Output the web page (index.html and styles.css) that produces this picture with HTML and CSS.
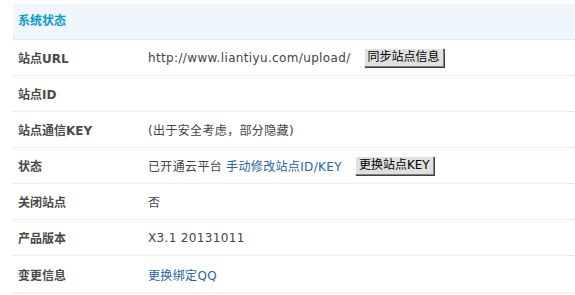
FILE: index.html
```html
<!DOCTYPE html>
<html>
<head>
<meta charset="utf-8">
<link rel="stylesheet" href="styles.css">
</head>
<body>
<div class="panel">
  <div class="head">系统状态</div>
  <div class="row"><div class="label">站点URL</div><div class="value">http://www.liantiyu.com/upload/<button class="btn">同步站点信息</button></div></div>
  <div class="row"><div class="label">站点ID</div><div class="value"></div></div>
  <div class="row"><div class="label">站点通信KEY</div><div class="value">(出于安全考虑，部分隐藏)</div></div>
  <div class="row"><div class="label">状态</div><div class="value">已开通云平台<a class="link gap" href="#">手动修改站点ID/KEY</a><button class="btn">更换站点KEY</button></div></div>
  <div class="row"><div class="label">关闭站点</div><div class="value">否</div></div>
  <div class="row"><div class="label">产品版本</div><div class="value">X3.1 20131011</div></div>
  <div class="row last"><div class="label">变更信息</div><div class="value"><a class="link" href="#">更换绑定QQ</a></div></div>
  <div class="foot"></div>
</div>
</body>
</html>
```

FILE: styles.css
```css
html, body {
  margin: 0;
  padding: 0;
  background: #fff;
}
body {
  font-family: "DejaVu Sans", "Noto Sans CJK SC", sans-serif;
  font-size: 12px;
  color: #333;
}
.panel {
  padding: 4px 0 0 13px;
}
.head {
  height: 35px;
  line-height: 35px;
  padding-left: 5px;
  background: #eff6fc;
  color: #0a9bcc;
  font-weight: bold;
  border-bottom: 1px dotted #cfe2f0;
}
.row {
  display: grid;
  grid-template-columns: 135px 1fr;
  align-items: center;
  height: 35px;
  border-bottom: 1px dotted #cfe2f0;
}
.row.last {
  height: 36px;
  border-bottom: none;
}
.label {
  padding-left: 5px;
  font-weight: bold;
  color: #4a4a4a;
}
.value {
  display: flex;
  align-items: center;
  color: #444;
  white-space: nowrap;
  letter-spacing: 0.35px;
}
.link {
  color: #2366a8;
  text-decoration: none;
}
.link.gap {
  margin-left: 4px;
}
.btn {
  margin-left: 13px;
  height: 19px;
  padding: 0 3px;
  font-family: "DejaVu Sans", "Noto Sans CJK SC", sans-serif;
  font-size: 12px;
  line-height: 15px;
  letter-spacing: 0;
  color: #000;
  background: #e0e0e0;
  border: 1px solid;
  border-color: #fff #808080 #808080 #fff;
  box-shadow: 1px 1px 0 #404040;
  border-radius: 0;
}
.foot {
  height: 2px;
  background: #eef4fa;
}
```
